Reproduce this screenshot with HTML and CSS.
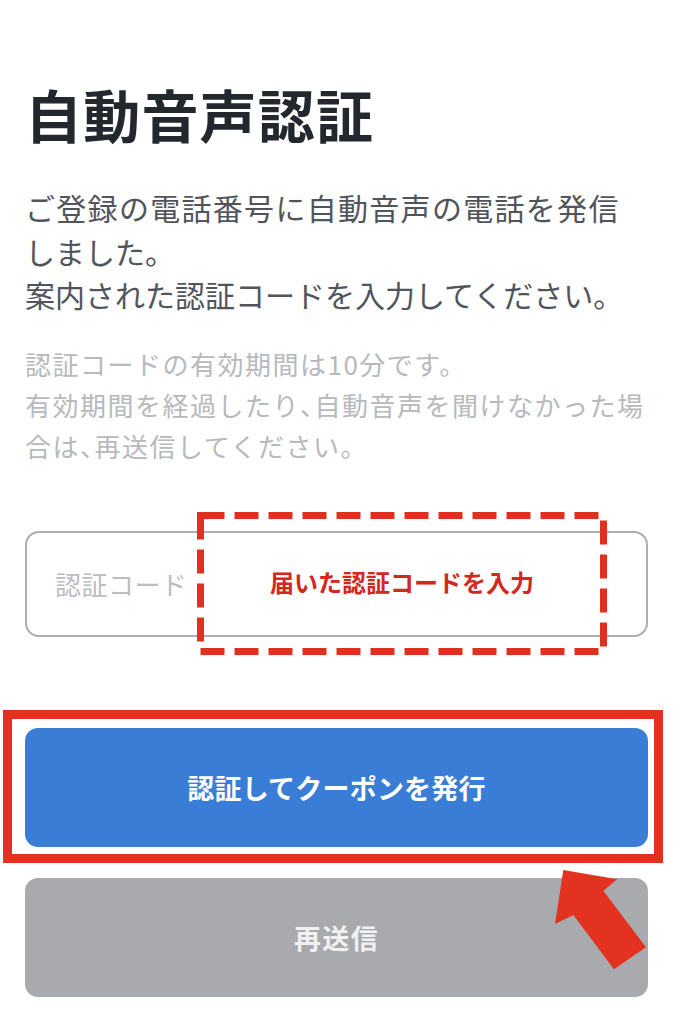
FILE: index.html
```html
<!DOCTYPE html>
<html lang="ja">
<head>
<meta charset="utf-8">
<title>自動音声認証</title>
<link rel="stylesheet" href="styles.css">
</head>
<body>
<main class="page">
  <h1 class="title">自動音声認証</h1>
  <p class="lead"><span class="spread">ご登録の電話番号に自動音声の電話を発信</span><br>しました。<br>案内された認証コードを入力してください。</p>
  <p class="note">認証コードの有効期間は10分です。<br>有効期間を経過したり<span class="comma">、</span>自動音声を聞けなかった場<br>合は<span class="comma">、</span>再送信してください。</p>

  <div class="field">
    <input class="code-input" type="text" placeholder="認証コード">
    <div class="dash-note">
      <svg class="dash-frame" viewBox="0 0 410 143" preserveAspectRatio="none" aria-hidden="true">
        <rect x="3.5" y="3.5" width="403" height="136" fill="none" stroke="#e0301f" stroke-width="7" stroke-dasharray="24 10"/>
      </svg>
      <span class="dash-text">届いた認証コードを入力</span>
    </div>
  </div>

  <div class="actions">
    <div class="primary-wrap">
      <button class="btn btn-primary" type="button">認証してクーポンを発行</button>
      <div class="highlight"></div>
    </div>
    <div class="secondary-wrap">
      <button class="btn btn-secondary" type="button">再送信</button>
      <svg class="arrow" width="96" height="104" viewBox="0 0 96 104" aria-hidden="true">
        <polygon points="10.3,2 64.3,11.3 50.3,22.7 93,79.3 61,101.3 20.3,47 2,56" fill="#e3321f"/>
      </svg>
    </div>
  </div>
</main>
</body>
</html>
```

FILE: styles.css
```css
html, body {
  margin: 0;
  padding: 0;
  background: #ffffff;
}

body {
  font-family: "Noto Sans CJK JP", "Noto Sans", sans-serif;
  width: 680px;
  height: 1024px;
  overflow: hidden;
}

.page {
  padding: 78px 32px 0 25px;
}

.title {
  margin: 0;
  font-size: 57px;
  line-height: 70px;
  font-weight: 700;
  color: #23272e;
  letter-spacing: 1.2px;
}

.lead {
  margin: 38px 0 0;
  font-size: 30px;
  line-height: 43.5px;
  color: #51555b;
  white-space: nowrap;
}

.lead .spread {
  letter-spacing: 1.3px;
}

.note {
  margin: 26px 0 0;
  font-size: 26px;
  line-height: 41px;
  color: #b8b9bc;
  letter-spacing: 1.5px;
  white-space: nowrap;
}

.note .comma {
  font-feature-settings: "halt" 1;
}

.field {
  position: relative;
  margin-top: 65px;
}

.code-input {
  display: block;
  box-sizing: border-box;
  width: 623px;
  height: 106px;
  margin: 0;
  padding: 0 0 0 28px;
  border: 2px solid #abadb2;
  border-radius: 14px;
  background: #ffffff;
  font-family: "Noto Sans CJK JP", sans-serif;
  font-size: 26px;
  color: #333;
  outline: none;
}

.code-input::placeholder {
  color: #bcbdc0;
  letter-spacing: 0.5px;
}

.dash-note {
  position: absolute;
  left: 172px;
  top: -19px;
  width: 410px;
  height: 143px;
  display: flex;
  align-items: center;
  justify-content: center;
}

.dash-frame {
  position: absolute;
  inset: 0;
  width: 100%;
  height: 100%;
}

.dash-text {
  position: relative;
  font-size: 24px;
  font-weight: 700;
  color: #d3281d;
  margin-top: -3px;
}

.actions {
  margin-top: 91px;
  display: flex;
  flex-direction: column;
  gap: 31px;
}

.primary-wrap,
.secondary-wrap {
  position: relative;
}

.btn {
  display: flex;
  align-items: center;
  justify-content: center;
  width: 623px;
  height: 119px;
  margin: 0;
  padding: 0;
  border: none;
  border-radius: 13px;
  font-family: "Noto Sans CJK JP", sans-serif;
  font-size: 27px;
  font-weight: 700;
  letter-spacing: 0.2px;
}

.btn-primary {
  background: #3a7dd6;
  color: #ffffff;
}

.btn-secondary {
  background: #a9aaae;
  color: #f1f1f3;
  font-size: 27px;
  letter-spacing: 1.3px;
}

.highlight {
  position: absolute;
  left: -22px;
  top: -18px;
  right: -15px;
  bottom: -16px;
  border: 9px solid #e2311f;
  pointer-events: none;
}

.arrow {
  position: absolute;
  left: 528px;
  top: -10px;
}
```
